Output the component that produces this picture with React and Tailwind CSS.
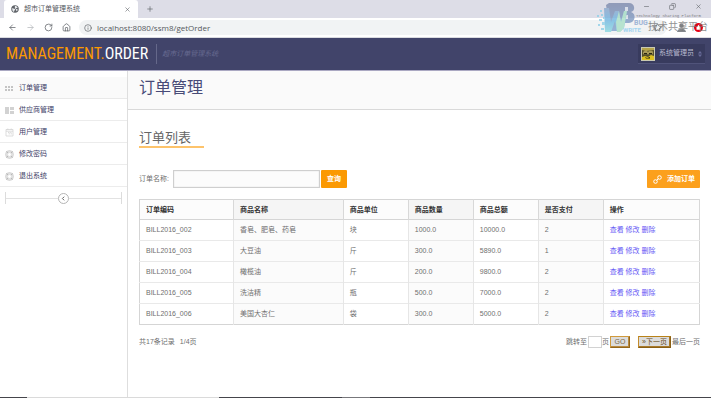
import React from 'react';
import { ArrowLeft, ArrowRight, RotateCw, House, Info, Star, X, Plus, Minus, Copy } from 'lucide-react';

const orders = [
  ['BILL2016_002', '香皂、肥皂、药皂', '块', '1000.0', '10000.0', '2'],
  ['BILL2016_003', '大豆油', '斤', '300.0', '5890.0', '1'],
  ['BILL2016_004', '橄榄油', '斤', '200.0', '9800.0', '2'],
  ['BILL2016_005', '洗洁精', '瓶', '500.0', '7000.0', '2'],
  ['BILL2016_006', '美国大杏仁', '袋', '300.0', '5000.0', '2'],
];

const columns = [
  { label: '订单编码', width: 'w-[16.8%]' },
  { label: '商品名称', width: 'w-[19.6%]' },
  { label: '商品单位', width: 'w-[11.6%]' },
  { label: '商品数量', width: 'w-[11.6%]' },
  { label: '商品总额', width: 'w-[11.6%]' },
  { label: '是否支付', width: 'w-[11.6%]' },
  { label: '操作', width: 'w-[17.2%]' },
];

function GridIcon() {
  return (
    <svg viewBox="0 0 9 9" className="size-[9px]" fill="#c4c4c4">
      <path d="M0 2h2v2H0zM3 2h2v2H3zM6 2h2v2H6zM0 5h2v2H0zM3 5h2v2H3zM6 5h2v2H6z" />
    </svg>
  );
}

function BlocksIcon() {
  return (
    <svg viewBox="0 0 9 9" className="size-[9px]" fill="#d2d2d2">
      <path d="M0 1h4v7H0zM5 1h4v3H5zM5 5h4v3H5z" />
    </svg>
  );
}

function CalendarIcon() {
  return (
    <svg viewBox="0 0 9 9" className="size-[9px]" fill="none" stroke="#d4d4d4" strokeWidth=".8">
      <path d="M1 1.500h7v6.500H1zM1 3.200h7M2.800.5v1.500M6.200.5v1.500M3 4.500h1.200v2M5.200 4.500h1v2" />
    </svg>
  );
}

function BuoyIcon() {
  return (
    <svg viewBox="0 0 9 9" className="size-[9px]" fill="none">
      <circle cx="4.500" cy="4.500" r="3" stroke="#e2e2e2" strokeWidth="2" />
      <circle cx="4.500" cy="4.500" r="4" stroke="#c8c8c8" strokeWidth=".6" />
      <circle cx="4.500" cy="4.500" r="1.900" stroke="#cccccc" strokeWidth=".5" />
      <path d="M1.500 1.500l1.500 1.500M7.500 1.500L6 3M1.500 7.500L3 6M7.500 7.500L6 6" stroke="#b8b8b8" strokeWidth="1" />
    </svg>
  );
}

const menu = [
  { label: '订单管理', Icon: GridIcon },
  { label: '供应商管理', Icon: BlocksIcon },
  { label: '用户管理', Icon: CalendarIcon },
  { label: '修改密码', Icon: BuoyIcon },
  { label: '退出系统', Icon: BuoyIcon },
];

function Globe() {
  return (
    <svg viewBox="0 0 16 16" className="size-2">
      <circle cx="8" cy="8" r="7.500" fill="#5f6368" />
      <path d="M2.500 6c2 .5 3 1.500 4.500 1.500S8.500 10 7 11c-1 .8-.5 2-1 3C3.500 13 2 10.500 2.500 6zM8 2c2-.3 4.500 1 5.500 3-1 1-3 .5-3.500 2 0 1.500 2.500 1 3.500 2-.5 2-1.500 3-2.500 3.500C10 11 11 9.500 9.500 8.500 8 7 7 4 8 2z" fill="#e8eaed" />
    </svg>
  );
}

function Watermark() {
  return (
    <div className="pointer-events-none absolute top-0.5 right-0 h-8 w-[115px] opacity-80">
      <svg viewBox="0 0 115 32" className="h-8 w-[115px]">
        <defs>
          <linearGradient id="wm-w" x1="0" y1="0" x2="0" y2="1">
            <stop offset="0" stopColor="#8fa9cd" />
            <stop offset=".5" stopColor="#6fb6e2" />
            <stop offset="1" stopColor="#8ad8df" />
          </linearGradient>
          <linearGradient id="wm-b" x1="0" y1="0" x2="0" y2="1">
            <stop offset="0" stopColor="#7f8bad" />
            <stop offset="1" stopColor="#7fa3cf" />
          </linearGradient>
        </defs>
        <path d="M13 1h20c6 0 7 8 2 9 6 2 4 11-2 11h-5l-3 8H14L10 3z" fill="url(#wm-b)" />
        <path d="M29 5h3v4h-3zM28 13h4v4h-4z" fill="#d9dfea" />
        <path d="M8 6h5l2 14 4-11h4l2 11 3-11h3l-3 17-4 4h-3l-2-11-4 11h-6z" fill="url(#wm-w)" />
        <path d="M23 9l2 11 3-11h3l-3 17-4 4h-3l-1-10z" fill="#a9e0c6" />
        <path d="M4 8h2v2H4zM5 12h2v2H5zM1 13h2v2H1zM3 17h3v2H3zM6 20h3v3H6zM2 22h2v2H2zM5 26h3v2H5zM7 15h2v2H7z" fill="#8fd0e8" />
      </svg>
      <span className="absolute top-[10px] left-10 text-[4px] leading-[8px] whitespace-nowrap text-[#666] font-['Liberation_Mono',monospace]">Technology Sharing Platform</span>
      <span className="absolute top-[17px] left-[38px] text-[7px] leading-[8px] font-bold text-[#8ba6cf] font-['Roboto',sans-serif]">BUG</span>
      <span className="absolute top-[24px] left-[27px] text-[6px] leading-[8px] font-bold text-[#8fcdf0] font-['Roboto',sans-serif]">WRITE</span>
      <span className="absolute top-[17px] left-[52px] text-[10px] leading-[15px] whitespace-nowrap text-[#777]">技术共享平台</span>
    </div>
  );
}

function BrowserChrome() {
  return (
    <div className="relative border-b border-[#dadbe0] text-[#5f6368]">
      <div className="flex h-[18px] bg-[#dddde7] pl-1">
        <div className="flex w-[134px] items-center gap-[5px] rounded-t-[3px] bg-white px-[7px]">
          <Globe />
          <span className="flex-1 text-[7px] leading-[10px] text-[#55585e]">超市订单管理系统</span>
          <button aria-label="关闭标签页"><X className="size-[7px]" /></button>
        </div>
        <button aria-label="新标签页" className="ml-2"><Plus className="size-2" /></button>
        <div className="ml-auto flex items-start gap-[19px] pt-[3px] pr-[9px]">
          <button aria-label="最小化"><Minus className="size-[7px]" /></button>
          <button aria-label="还原"><Copy className="size-[7px] -scale-x-100" /></button>
          <button aria-label="关闭"><X className="size-[7px]" /></button>
        </div>
      </div>
      <div className="flex h-[19px] items-center bg-white py-0.5 pl-2">
        <button aria-label="后退"><ArrowLeft className="size-[9px]" /></button>
        <button aria-label="前进" className="ml-[9px]"><ArrowRight className="size-[9px] text-[#b5b8bc]" /></button>
        <button aria-label="刷新" className="ml-[9px]"><RotateCw className="size-[9px]" /></button>
        <button aria-label="主页" className="ml-[9px]"><House className="size-[9px]" /></button>
        <div className="ml-2 flex h-[15px] flex-1 items-center gap-[5px] rounded-full bg-[#f1f3f4] px-[5px]">
          <Info className="size-2" />
          <input aria-label="地址" defaultValue="localhost:8080/ssm8/getOrder" className="h-3 min-w-0 flex-1 bg-transparent text-[8px] leading-3 text-[#55595d] outline-none font-['Open_Sans',sans-serif]" />
          <Star className="size-[9px]" />
        </div>
        <div className="flex items-center gap-2 pr-2 pl-2.5">
          <svg viewBox="0 0 10 10" className="size-[9px]" fill="#85888d"><circle cx="5" cy="3" r="2.500" /><path d="M0 10c0-5 10-5 10 0z" /></svg>
          <svg viewBox="0 0 10 10" className="size-[9px]"><circle cx="5" cy="5" r="5" fill="#e60012" /><path d="M5 2l2.200 3v2.500H2.800V5z" fill="white" /></svg>
        </div>
      </div>
      <Watermark />
    </div>
  );
}

function Header() {
  return (
    <header className="flex h-[33px] items-center border-b border-[#aaa8c2] bg-[#41446a] pr-1.5 pl-1.5">
      <h1 className="text-[16px] leading-5 text-white font-['Roboto_Condensed','Liberation_Sans_Narrow','Roboto',sans-serif]">
        <span className="text-[#fb9902]">MANAGEMENT.</span>ORDER
      </h1>
      <div className="ml-2 flex h-5 items-center border-l border-[#65688a] pl-[5px] text-[7px] text-[#686b91] italic">超市订单管理系统</div>
      <button className="ml-auto flex h-5 items-center gap-1 border-b border-[#50537a] bg-[#383b5e] px-[3px] text-[7px] text-[#b8bad0]">
        <svg viewBox="0 0 14 14" className="size-3.5">
          <path d="M0 0h14v14H0z" fill="#c9c9b0" />
          <path d="M1 1h12v12H1z" fill="#55502a" />
          <path d="M1 10l3-1 3 1 3-2 3 1v4H1z" fill="#dcc022" />
          <path d="M1 1h12v2L9 3.500 5 4 1 3z" fill="#b5a44a" />
          <path d="M2 5c2-2 4-1 5 0 1-1 4-2 5 0 1 3-3 4-5 2-2 2-6 1-5-2z" fill="#a89a58" />
          <path d="M3 6h3v1.500H3zM8 6h3v1.500H8zM4 10l2 1 3-1v1.500H5z" fill="#26240f" />
        </svg>
        <span>系统管理员</span>
        <svg viewBox="0 0 4 6" className="h-1.5 w-1" fill="#696c99"><path d="M2 0l2 2.500H0zM2 6l2-2.500H0z" /></svg>
      </button>
    </header>
  );
}

function Sidebar() {
  return (
    <nav className="w-32 shrink-0 border-r border-[#dedede] pt-1.5">
      <ul>
        {menu.map(({ label, Icon }, i) => (
          <li key={label} className={i === 0 ? 'border-b border-[#e9e9e9] bg-[#fafafa]' : 'border-b border-[#ececec]'}>
            <a href="#" className="flex h-[21px] items-center gap-[5px] pt-px pl-[5px] text-[7px] text-[#3d4066]">
              <Icon />
              {label}
            </a>
          </li>
        ))}
      </ul>
      <div className="mx-[5px] mt-[5px] flex h-3 items-center border-x border-[#dcdcdc]">
        <span className="h-px flex-1 bg-[#e2e2e2]" />
        <button aria-label="收起菜单" className="size-[11px] rounded-full border border-[#b5b5b5] bg-white">
          <svg viewBox="0 0 9 9" className="size-[9px]" fill="none" stroke="#666" strokeWidth="1"><path d="M5.200 2.700L3.400 4.500l1.800 1.800" /></svg>
        </button>
        <span className="h-px flex-1 bg-[#e2e2e2]" />
      </div>
    </nav>
  );
}

function OrderTable() {
  return (
    <table className="mt-[11px] w-full table-fixed border-collapse border border-[#d5d5d5] text-left text-[7px] leading-[10px] text-[#6f6f6f]">
      <thead>
        <tr className="h-[20px] border-b border-[#d5d5d5] text-[#333]">
          {columns.map(({ label, width }, i) => (
            <th key={label} className={`${width} border-r border-[#d8d8d8] px-1.5 font-bold ${i % 2 ? 'bg-[#f5f5f5]' : 'bg-[#fcfcfc]'}`}>{label}</th>
          ))}
        </tr>
      </thead>
      <tbody>
        {orders.map((row) => (
          <tr key={row[0]} className="h-[21px] border-b border-[#e9e9e9] last:border-[#d5d5d5]">
            {row.map((value, i) => (
              <td key={i} className={`border-r border-[#e6e6e6] px-1.5 ${i % 2 ? 'bg-[#fbfbfb]' : 'bg-white'}`}>{value}</td>
            ))}
            <td className="px-1.5 whitespace-nowrap text-[#6558f5]">
              <a href="#">查看</a> <a href="#">修改</a> <a href="#">删除</a>
            </td>
          </tr>
        ))}
      </tbody>
    </table>
  );
}

function Pager() {
  return (
    <div className="mt-[11px] flex items-center text-[7px] leading-[10px] text-[#6f6f6f]">
      <span>共17条记录</span>
      <span className="ml-[5px]">1/4页</span>
      <label htmlFor="page" className="ml-auto">跳转至</label>
      <input id="page" className="ml-px h-[12px] w-3.5 border border-[#d2d2d2] bg-white" />
      <span>页</span>
      <button className="ml-px h-[12px] w-5 border border-t-[#d09a3c] border-r-[#94661a] border-b-[#94661a] border-l-[#d09a3c] bg-[#dcdcdc] leading-[10px] text-[#7d6a45] shadow-[inset_-1px_-1px_0_#b98a40]">GO</button>
      <button className="ml-2 h-[12px] w-[33px] border border-t-[#b98218] border-r-[#8a5f14] border-b-[#8a5f14] border-l-[#c48c2c] bg-[#dcdcdc] leading-[10px] whitespace-nowrap text-[#6b4d1b] shadow-[inset_-1px_-1px_0_#a87a2c]">»下一页</button>
      <a href="#" className="ml-px">最后一页</a>
    </div>
  );
}

export default function App() {
  return (
    <div className="min-h-screen bg-white pr-1 pb-1 font-['Liberation_Sans','Noto_Sans_CJK_SC',sans-serif]">
      <div className="flex min-h-[calc(100vh-4px)] flex-col">
        <BrowserChrome />
        <Header />
        <div className="flex flex-1">
          <Sidebar />
          <main className="min-w-0 flex-1">
            <div className="h-[39px] border-b border-[#d9d9d9] bg-[#fafafa] px-[11px] pt-[7px]">
              <h2 className="text-[16px] leading-5 text-[#484b77]">订单管理</h2>
            </div>
            <section className="px-[11px] pt-[19px]">
              <h3 className="w-[65px] border-b-2 border-[#fdc36b] text-[13px] leading-[17px] text-[#666]">订单列表</h3>
              <form className="mt-[22px] flex items-center text-[7px] text-[#6f6f6f]" onSubmit={(e) => e.preventDefault()}>
                <label htmlFor="order-name" className="w-[34px]">订单名称:</label>
                <input id="order-name" className="h-[18px] w-[147px] border border-[#cfcfcf] bg-[#fcfcfc] px-1 shadow-[inset_0_0_1px_#bbb]" />
                <button className="ml-px h-[18px] w-[26px] rounded-[1px] bg-[#fb9902] font-bold text-white">查询</button>
                <button type="button" className="ml-auto flex h-[18px] w-[53px] items-center gap-[5px] rounded-[1px] bg-[#fca01c] pl-1.5 font-bold whitespace-nowrap text-white">
                  <svg viewBox="0 0 9 9" className="size-[9px]" fill="none" stroke="white" strokeWidth="1"><circle cx="2.500" cy="6.500" r="1.800" /><circle cx="6.500" cy="2.500" r="1.800" /><path d="M3.500 5.500l2-2" /></svg>
                  添加订单
                </button>
              </form>
              <OrderTable />
              <Pager />
            </section>
          </main>
        </div>
        <div className="flex h-px bg-[#45454b]">
          <span className="ml-[27px] w-48 bg-[#dadada]" />
          <span className="ml-[123px] w-7 bg-[#77777b]" />
        </div>
      </div>
    </div>
  );
}
